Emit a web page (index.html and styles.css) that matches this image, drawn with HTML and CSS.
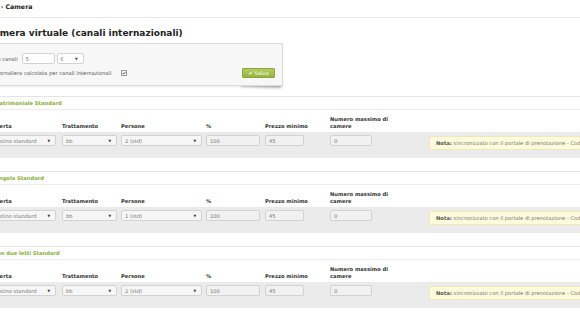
FILE: index.html
```html
<!DOCTYPE html>
<html>
<head>
    <meta charset="utf-8">
    <link rel="stylesheet" href="styles.css">
</head>
<body>
    <div class="page">
        <div class="crumb">Home <span class="crumb-sep">›</span> Camera</div>
        <h1 class="title">Camera virtuale (canali internazionali)</h1>

        <div class="panel">
            <div class="panel-row">
                <span class="panel-label">Aumento canali</span>
                <span class="field field-price">5</span>
                <span class="field field-select field-currency">€<i class="arrow">▼</i></span>
            </div>
            <div class="panel-row">
                <span class="panel-label">Tariffa giornaliera calcolata per canali internazionali</span>
                <span class="check">
                    <svg viewBox="0 0 6 6" width="4" height="4"><path d="M0.8 3.2 L2.4 4.8 L5.2 1.2" fill="none" stroke="#333" stroke-width="1.3"/></svg>
                </span>
                <button class="btn-save">✔ Salva</button>
            </div>
        </div>

        <div class="room">
            <div class="room-name">Camera matrimoniale Standard</div>
            <div class="room-head">
                <div>Offerta</div>
                <div>Trattamento</div>
                <div>Persone</div>
                <div>%</div>
                <div>Prezzo minimo</div>
                <div class="head-wrap">Numero massimo di camere</div>
            </div>
            <div class="room-row">
                <span class="field field-select w-offer">Listino standard<i class="arrow">▼</i></span>
                <span class="field field-select w-meal">bb<i class="arrow">▼</i></span>
                <span class="field field-select w-people">2 (std)<i class="arrow">▼</i></span>
                <span class="field w-pct">100</span>
                <span class="field w-price">45</span>
                <span class="field w-rooms">0</span>
                <div class="note"><b>Nota:</b> sincronizzato con il portale di prenotazione - Codice camera MAT-STD</div>
            </div>
        </div>

        <div class="room">
            <div class="room-name">Camera singola Standard</div>
            <div class="room-head">
                <div>Offerta</div>
                <div>Trattamento</div>
                <div>Persone</div>
                <div>%</div>
                <div>Prezzo minimo</div>
                <div class="head-wrap">Numero massimo di camere</div>
            </div>
            <div class="room-row">
                <span class="field field-select w-offer">Listino standard<i class="arrow">▼</i></span>
                <span class="field field-select w-meal">bb<i class="arrow">▼</i></span>
                <span class="field field-select w-people">1 (std)<i class="arrow">▼</i></span>
                <span class="field w-pct">100</span>
                <span class="field w-price">45</span>
                <span class="field w-rooms">0</span>
                <div class="note"><b>Nota:</b> sincronizzato con il portale di prenotazione - Codice camera SGL-STD</div>
            </div>
        </div>

        <div class="room">
            <div class="room-name">Camera con due letti Standard</div>
            <div class="room-head">
                <div>Offerta</div>
                <div>Trattamento</div>
                <div>Persone</div>
                <div>%</div>
                <div>Prezzo minimo</div>
                <div class="head-wrap">Numero massimo di camere</div>
            </div>
            <div class="room-row">
                <span class="field field-select w-offer">Listino standard<i class="arrow">▼</i></span>
                <span class="field field-select w-meal">bb<i class="arrow">▼</i></span>
                <span class="field field-select w-people">2 (std)<i class="arrow">▼</i></span>
                <span class="field w-pct">100</span>
                <span class="field w-price">45</span>
                <span class="field w-rooms">0</span>
                <div class="note"><b>Nota:</b> sincronizzato con il portale di prenotazione - Codice camera TWN-STD</div>
            </div>
        </div>
    </div>
</body>
</html>
```

FILE: styles.css
```css
body {
    margin: 0;
    overflow: hidden;
    background: #fff;
    font-family: "DejaVu Sans", Verdana, sans-serif;
    font-size: 5.2px;
    color: #555;
}

.page {
    width: 660px;
    margin-left: -30px;
}

.crumb {
    padding-left: 8px;
    font-size: 6.3px;
    font-weight: bold;
    line-height: 14px;
    padding-bottom: 3px;
    color: #222;
    border-bottom: 1px solid #ececec;
}

.crumb-sep {
    color: #333;
}

.title {
    margin: 9px 0 4px;
    padding-left: 17px;
    font-size: 9px;
    line-height: 12px;
    color: #222;
}

/* settings box */
.panel {
    position: relative;
    width: 298px;
    padding: 9px 7px 7px 6px;
    background: #f7f7f7;
    border: 1px solid #dcdcdc;
    box-shadow: 0 1px 2px rgba(0, 0, 0, 0.08);
}

.panel::after {
    content: "";
    position: absolute;
    right: 3px;
    bottom: 1px;
    width: 40px;
    height: 6px;
    box-shadow: 2px 3px 3px rgba(0, 0, 0, 0.35);
    transform: rotate(2deg);
    z-index: -1;
}

.panel-row {
    display: flex;
    align-items: center;
    gap: 2px;
}

.panel-row + .panel-row {
    margin-top: 4px;
}

.panel-label {
    margin-right: 2px;
    white-space: nowrap;
}

.field {
    display: flex;
    align-items: center;
    box-sizing: border-box;
    height: 11px;
    padding: 0 3px;
    background: #f1f1f1;
    border: 1px solid #d2d2d2;
    border-radius: 2px;
    color: #777;
    white-space: nowrap;
}

.field-select {
    justify-content: space-between;
    background: #f6f6f6;
}

.arrow {
    font-style: normal;
    font-size: 3.4px;
    color: #333;
    margin-right: 2px;
}

.field-price {
    width: 33px;
    background: #fff;
}

.field-currency {
    width: 27px;
    background: #fff;
}

.check {
    display: flex;
    align-items: center;
    justify-content: center;
    box-sizing: border-box;
    width: 6px;
    height: 6px;
    margin-left: 6px;
    background: #fff;
    border: 1px solid #999;
}

.btn-save {
    margin-left: auto;
    box-sizing: border-box;
    width: 33px;
    height: 10px;
    padding: 0;
    font-family: inherit;
    font-size: 5.2px;
    color: #fff;
    background: linear-gradient(#b3cd5f, #96b43e);
    border: 1px solid #89a63a;
    border-radius: 1px;
}

/* rooms */
.room {
    margin-top: 10px;
    border-top: 1px solid #e4e4e4;
}

.room + .room {
    margin-top: 13px;
}

.room-name {
    line-height: 12px;
    font-weight: bold;
    color: #8aad36;
    border-bottom: 1px solid #ececec;
}

.room-head,
.room-row {
    display: grid;
    grid-template-columns: 71px 59px 85px 59px 65px 99px 1fr;
    padding-left: 21px;
}

.room-head {
    height: 20px;
    padding-bottom: 2px;
    align-items: end;
    font-weight: bold;
    line-height: 7px;
    color: #333;
}

.head-wrap {
    max-width: 64px;
}

.room-row {
    align-items: start;
    padding-top: 3px;
    padding-bottom: 8px;
    background: #ebebeb;
}

.w-offer { width: 65px; }
.w-meal { width: 55px; }
.w-people { width: 81px; }
.w-pct { width: 54px; }
.w-price { width: 39px; }
.w-rooms { width: 42px; }

.note {
    box-sizing: border-box;
    height: 14px;
    margin-top: 1px;
    padding-left: 6px;
    line-height: 12px;
    white-space: nowrap;
    overflow: hidden;
    background: #fdfbdc;
    border: 1px solid #efe9ba;
    color: #777;
}

.note b {
    color: #555;
}
```
